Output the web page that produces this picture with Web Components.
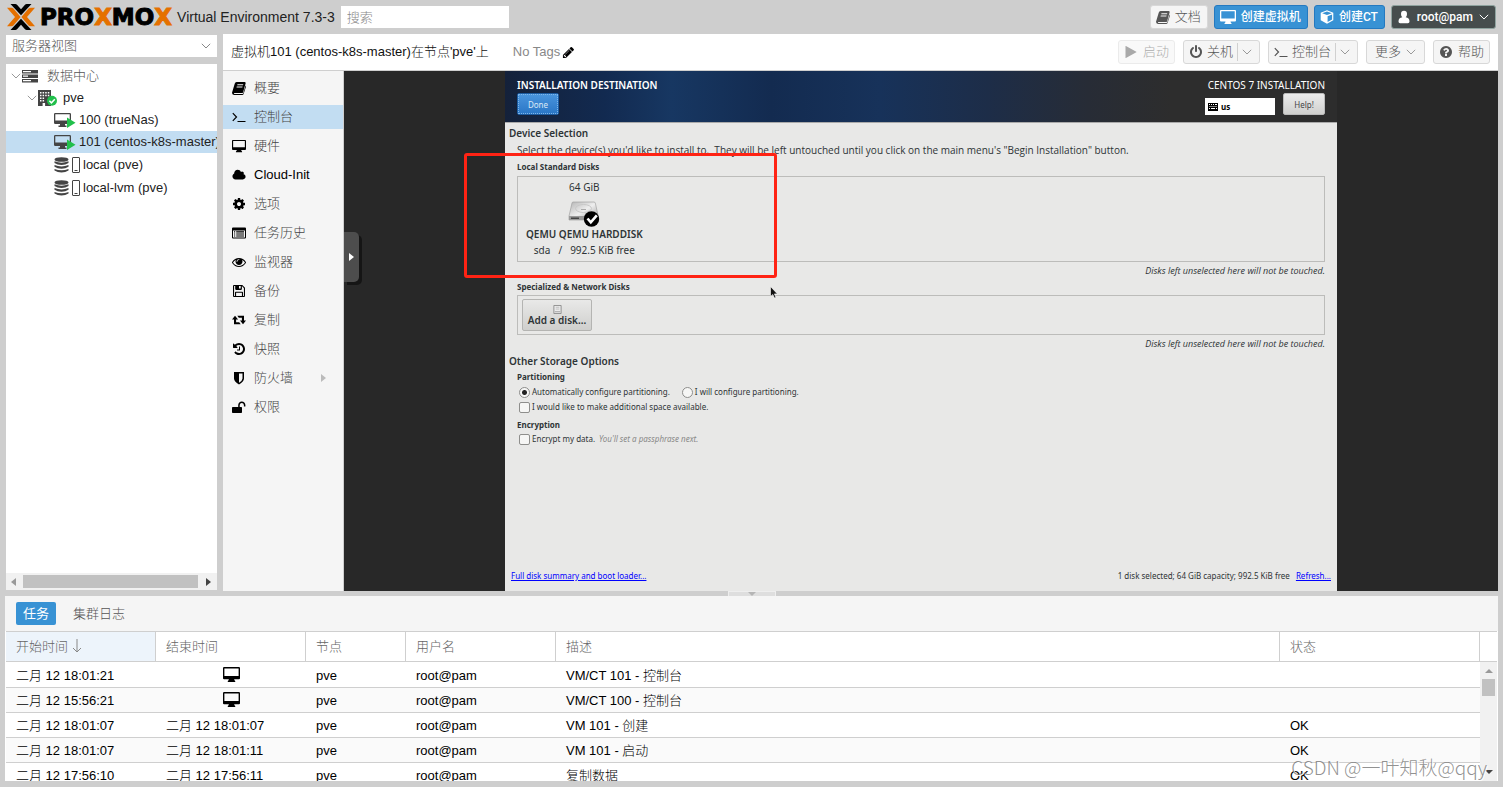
<!DOCTYPE html>
<html lang="zh-CN">
<head>
<meta charset="utf-8">
<title>pve - Proxmox Virtual Environment</title>
<style>
  html, body { margin: 0; height: 100%; }
  body {
    background: #cecece;
    color: #000;
    font: 300 13px/18px "Liberation Sans", "Noto Sans CJK SC", sans-serif;
    overflow: hidden;
  }
</style>
</head>
<body>
<pve-app></pve-app>

<script>
const ICONS = {
  cog: ['0 0 1792 1792', '<path d="M1152 896q0-106-75-181t-181-75-181 75-75 181 75 181 181 75 181-75 75-181zm512-109v222q0 12-8 23t-20 13l-185 28q-19 54-39 91 35 50 107 138 10 12 10 25t-9 23q-27 37-99 108t-94 71q-12 0-26-9l-138-108q-44 23-91 38-16 136-29 186-7 28-36 28h-222q-14 0-24.5-8.5t-11.5-21.5l-28-184q-49-16-90-37l-141 107q-10 9-25 9-14 0-25-11-126-114-165-168-7-10-7-23 0-12 8-23 15-21 51-66.5t54-70.5q-27-50-41-99l-183-27q-13-2-21-12.5t-8-23.5v-222q0-12 8-23t19-13l186-28q14-46 39-92-40-57-107-138-10-12-10-24 0-10 9-23 26-36 98.5-107.5t94.5-71.5q13 0 26 10l138 107q44-23 91-38 16-136 29-186 7-28 36-28h222q14 0 24.5 8.5t11.5 21.5l28 184q49 16 90 37l142-107q9-9 24-9 13 0 25 10 129 119 165 170 7 8 7 22 0 12-8 23-15 21-51 66.5t-54 70.5q26 50 41 98l183 28q13 2 21 12.5t8 23.5z"/>'],
  play: ['0 0 1792 1792', '<path d="M1576 927l-1328 738q-23 13-39.5 3t-16.5-36v-1472q0-26 16.5-36t39.5 3l1328 738q23 13 23 31t-23 31z"/>'],
  cloud: ['0 0 2048 1792', '<path d="M1984 1152q0 159-112.5 271.5t-271.5 112.5h-1088q-185 0-316.5-131.5t-131.5-316.5q0-132 71-241.5t187-163.5q-2-28-2-43 0-212 150-362t362-150q158 0 286.5 88t187.5 230q70-62 166-62 106 0 181 75t75 181q0 75-41 138 129 30 213 134.5t84 239.5z"/>'],
  power: ['0 0 1792 1792', '<path d="M1664 896q0 156-61 298t-164 245-245 164-298 61-298-61-245-164-164-245-61-298q0-182 80.5-343t226.5-270q43-32 95.5-25t83.5 50q32 42 24.5 94.5t-49.5 84.5q-98 74-151.5 181t-53.5 228q0 104 40.5 198.5t109.5 163.5 163.5 109.5 198.5 40.5 198.5-40.5 163.5-109.5 109.5-163.5 40.5-198.5q0-121-53.5-228t-151.5-181q-42-32-49.5-84.5t24.5-94.5q31-43 84-50t95 25q146 109 226.5 270t80.5 343zm-640-768v640q0 52-38 90t-90 38-90-38-38-90v-640q0-52 38-90t90-38 90 38 38 90z"/>'],
  history: ['0 0 1792 1792', '<path d="M1664 896q0 156-61 298t-164 245-245 164-298 61q-172 0-327-72.5t-264-204.5q-7-10-6.5-22.5t8.5-20.5l137-138q10-9 25-9 16 2 23 12 73 95 179 147t225 52q104 0 198.5-40.5t163.5-109.5 109.5-163.5 40.5-198.5-40.5-198.5-109.5-163.5-163.5-109.5-198.5-40.5q-98 0-188 35.5t-160 101.5l137 138q31 30 14 69-17 40-59 40h-448q-26 0-45-19t-19-45v-448q0-42 40-59 39-17 69 14l130 129q107-101 244.5-156.5t284.5-55.5q156 0 298 61t245 164 164 245 61 298zm-640-288v448q0 14-9 23t-23 9h-320q-14 0-23-9t-9-23v-64q0-14 9-23t23-9h224v-352q0-14 9-23t23-9h64q14 0 23 9t9 23z"/>'],
  help: ['0 0 1792 1792', '<path d="M1024 1376v-192q0-14-9-23t-23-9h-192q-14 0-23 9t-9 23v192q0 14 9 23t23 9h192q14 0 23-9t9-23zm256-672q0-88-55.5-163t-138.5-116-170-41q-243 0-371 213-15 24 8 42l132 100q7 6 19 6 16 0 25-12 53-68 86-92 34-24 86-24 48 0 85.5 26t37.5 59q0 38-20 61t-68 45q-63 28-115.5 86.5t-52.5 125.5v36q0 14 9 23t23 9h192q14 0 23-9t9-23q0-19 21.5-49.5t54.5-49.5q32-18 49-28.5t46-35 44.5-48 28-60.5 12.5-81zm384 192q0 209-103 385.5t-279.5 279.5-385.5 103-385.5-103-279.5-279.5-103-385.5 103-385.5 279.5-279.5 385.5-103 385.5 103 279.5 279.5 103 385.5z"/>'],
  pencil: ['0 0 1792 1792', '<path d="M491 1536l91-91-235-235-91 91v107h128v128h107zm523-928q0-22-22-22-10 0-17 7l-542 542q-7 7-7 17 0 22 22 22 10 0 17-7l542-542q7-7 7-17zm-54-192l416 416-832 832h-416v-416zm683 96q0 53-37 90l-166 166-416-416 166-165q36-38 90-38 53 0 91 38l235 234q37 39 37 91z"/>'],
  eye: ['0 0 1792 1792', '<path d="M1664 960q-152-236-381-353 61 104 61 225 0 185-131.5 316.5t-316.5 131.5-316.5-131.5-131.5-316.5q0-121 61-225-229 117-381 353 133 205 333.5 326.5t434.5 121.5 434.5-121.5 333.5-326.5zm-720-384q0-20-14-34t-34-14q-125 0-214.5 89.5t-89.5 214.5q0 20 14 34t34 14 34-14 14-34q0-86 61-147t147-61q20 0 34-14t14-34zm848 384q0 34-20 69-140 230-376.5 368.5t-499.5 138.5-499.5-139-376.5-368q-20-35-20-69t20-69q140-229 376.5-368t499.5-139 499.5 139 376.5 368q20 35 20 69z"/>'],
  desktop: ['0 0 16 14', '<path fill-rule="evenodd" d="M1 0h14q1 0 1 1v9.500q0 1-1 1h-4.500q0 1 1 1.700v.800h-7v-.800q1-.700 1-1.700h-4.500q-1 0-1-1v-9.500q0-1 1-1zm.300 1.300v7.200h13.400v-7.200z"/>'],
  book: ['0 0 14 14', '<path fill-rule="evenodd" d="M4.600 1h8q1.300.2 1 1.600l-2.500 8.600q-.3.900-1.300.9h-7.600q-.6.500.3.8h7.900q.7 0 .9-.7l2.300-7.600q.6.300.3 1.400l-2.300 7q-.4 1-1.400 1h-8.200q-2-.3-2-2.200l2.700-9q.4-1.600 1.900-1.800zm.9 2.300-.3 1h5.800l.3-1zm-.7 2.300-.3 1h5.800l.3-1z"/>'],
  terminal: ['0 0 14 14', '<path d="M.8 3.200 4.500 7 .8 10.800" fill="none" stroke="currentColor" stroke-width="1.200"/><path d="M5.500 11h8v1h-8z"/>'],
  list: ['0 0 14 14', '<path fill-rule="evenodd" d="M1 1.500h12q1 0 1 1v9q0 1-1 1H1q-1 0-1-1v-9q0-1 1-1zm0 3v7h12v-7zm1 .8h1.200v1.100H2zm2.200 0h7.800v1.100H4.200zM2 7.400h1.200v1.100H2zm2.200 0h7.800v1.100H4.200zM2 9.500h1.200v1.100H2zm2.200 0h7.800v1.100H4.200z"/>'],
  floppy: ['0 0 14 14', '<path fill-rule="evenodd" d="M2 1h8.300l2.700 2.700V12q0 1-1 1H2q-1 0-1-1V2q0-1 1-1zm.1 1.100v9.800H3V8.500q0-.8.800-.8h6.400q.8 0 .8.800v3.400h.9V4.200L9.900 2.100v3q0 .8-.8.8H4q-.8 0-.8-.8v-3zm4.900 0v2.500h1.700V2.100zM4.100 8.800v3.100h5.800V8.800z"/>'],
  retweet: ['0 0 14 14', '<path d="M3 2.700 0 6.500h2V11.300h6.700L7.200 9.300H4.100V6.500h2zM5.300 2.700h6.700v4.800h2l-3 3.800-3-3.800h1.900V4.700H6.800z"/>'],
  shield: ['0 0 14 14', '<path fill-rule="evenodd" d="M2 1h10v6.500q0 3-5 6-5-3-5-6zm5 1.500v9.200q3.500-2.200 3.500-4.200v-5z"/>'],
  unlock: ['0 0 14 14', '<path d="M9.800 1.500q3.200 0 3.600 3.500v1.600h-1.500V5q-.3-2-2.100-2t-2.100 2v2h1.500q.8 0 .8.800v4.400q0 .8-.8.800H.8q-.8 0-.8-.8V7.800q0-.8.800-.8h5.400V5q.4-3.500 3.600-3.500z"/>'],
  user: ['0 0 14 14', '<path d="M7 .800q3 0 3 3.200 0 2.200-1.300 3.200 3.800.3 3.800 4.300 0 1.700-1.600 1.700H3.100q-1.600 0-1.600-1.700 0-4 3.800-4.300Q4 6.200 4 4q0-3.200 3-3.200z"/>'],
  cube: ['0 0 14 14', '<path fill-rule="evenodd" d="M7 .3l6.300 2.400v7.600L7 13.700.7 10.300V2.700zm0 1.200L2.200 3.300 7 5.100l4.800-1.800zM7.600 6.300v5.700l4.500-2.400V4.600z"/>'],
  chevron: ['0 0 10 10', '<path d="M.8 2.800 5 7l4.200-4.200" fill="none" stroke="currentColor"/>'],
  right: ['0 0 6 8', '<path d="M0 0v8l5-4z"/>'],
  left: ['0 0 6 8', '<path d="M5 0v8l-5-4z"/>'],
  up: ['0 0 8 4', '<path d="M0 4h8L4 0z"/>'],
  down: ['0 0 8 4', '<path d="M0 0h8L4 4z"/>'],
  sort: ['0 0 10 14', '<path d="M5 0v13M1 9l4 4 4-4" fill="none" stroke="currentColor"/>'],
  server: ['0 0 16 14', '<path fill-rule="evenodd" d="M0 1h16v3.400H0zm1 1.100v1.200h8V2.100zM0 5.500h16v3.400H0zm1 1.100v1.200h5V6.600zM0 10h16v3.400H0zm1 1.100v1.200h8v-1.200z"/>'],
  node: ['0 0 19 16', '<path fill-rule="evenodd" d="M0 0h13v16H0zm2 2v1.500h1.500V2zm2.600 0v1.500h1.500V2zm2.600 0v1.500h1.500V2zm2.600 0v1.500h1.500V2zM2 4.700v1.500h1.500V4.700zm2.600 0v1.500h1.500V4.700zm2.600 0v1.500h1.500V4.700zm2.600 0v1.500h1.500V4.700zM2 7.400v1.500h1.500V7.400zm2.600 0v1.500h1.500V7.400zM2 10.100v1.500h1.500v-1.500zm2.600 0v1.500h1.500v-1.500zM4.600 13v3h2.500v-3z"/><circle cx="14" cy="10.800" r="5" fill="#21bf4b"/><path d="m11.400 10.800 2 2 3.400-3.600" fill="none" stroke="#fff" stroke-width="1.500"/>'],
  vm: ['0 0 22 16', '<path fill-rule="evenodd" d="M1.200 1h14.600q1.200 0 1.200 1.200v8.600q0 1.200-1.200 1.200h-4.800v1.600h1.500V15H4.500v-1.400H6V12H1.200Q0 12 0 10.800V2.200Q0 1 1.200 1zm.1 1.200v6.300h14.400V2.200z"/><path d="M13 5.500v10.500l8.500-5.200z" fill="#21bf4b"/>'],
  storage: ['0 0 26 16', '<ellipse cx="7.500" cy="2.500" rx="7" ry="2.300"/><path d="M.5 4.300q7 2.800 14 0v1.700q-3 1.900-7 1.900T.5 6zm0 3.800q7 2.800 14 0v1.700q-3 1.900-7 1.900T.5 9.800zm0 3.800q7 2.800 14 0v1.700q-3 1.900-7 1.900t-7-1.900z"/><rect x="18.500" y=".5" width="7" height="15" rx=".5" fill="#fff" stroke="currentColor"/><path d="M20.500 13h3v1h-3z"/>'],
  keyboard: ['0 0 10 8', '<path fill-rule="evenodd" d="M0 0h10v8H0zm1 1v1h1V1zm2 0v1h1V1zm2 0v1h1V1zm2 0v1h2V1zM1.500 3v1h1V3zm2 0v1h1V3zm2 0v1h1V3zm2 0v1h1V3zM1 5v1h1V5zm2 0v1h4V5zm5 0v1h1V5z"/>'],
  disk: ['0 0 32 28', '<defs><linearGradient id="g" x1="0" y1="0" x2="1" y2="1"><stop offset="0" stop-color="#b4b4b4"/><stop offset=".5" stop-color="#eee"/><stop offset="1" stop-color="#999"/></linearGradient></defs><path d="M5 1h21q1 0 1.300 1L30 14v5H1v-4L4 2q.3-1 1-1z" fill="url(#g)" stroke="#999" stroke-width=".6"/><path d="M1 15h29v4H1z" fill="#9a9a9a"/><path d="M3 16.500h8v1.500H3z" fill="#444"/><ellipse cx="15.500" cy="7.500" rx="8" ry="4" fill="none" stroke="#c8c8c8"/><path d="M13 8.500h5" stroke="#aaa"/><circle cx="23.500" cy="18" r="7.700" fill="#000"/><path d="m19.500 17.500 3.300 3.800 6-7" fill="none" stroke="#fff" stroke-width="2.600"/>'],
  smalldisk: ['0 0 10 10', '<path d="M1 .5h8v9H1z" fill="#ececec" stroke="#888"/><path d="M3 2.500h4M3 4.500h4" stroke="#bbb"/><path d="M2 7.500h6" stroke="#999"/>'],
  pointer: ['0 0 8 13', '<path d="M.5.500v10l2.300-2 1.700 3.600 1.500-.7-1.600-3.500h3z" fill="#111" stroke="#fff" stroke-width=".6"/>'],
  logo: ['0 0 28 26', '<path d="M3.500 0h4.800q1 0 1.700.8l4 4.400 4-4.400q.7-.8 1.700-.8h4.800L14 11.300zM3.500 26h4.800q1 0 1.700-.8l4-4.400 4 4.400q.7.800 1.700.8h4.800L14 14.700z" fill="#000"/><path d="M0 3.800h4.500q1.100 0 1.900.8L13.600 13l-7.200 8.400q-.8.800-1.900.8H0L8 13zM28 3.800h-4.500q-1.100 0-1.900.8L14.400 13l7.200 8.400q.8.800 1.900.8H28L20 13z" fill="#e57000"/>']
};

function define(name, css, html) {
  const tpl = document.createElement('template');
  tpl.innerHTML = '<style>*{box-sizing:border-box}' + css + '</style>' + html;
  customElements.define(name, class extends HTMLElement {
    constructor() {
      super();
      this.attachShadow({ mode: 'open' }).append(tpl.content.cloneNode(true));
    }
  });
}

customElements.define('pve-icon', class extends HTMLElement {
  connectedCallback() {
    if (this.shadowRoot) return;
    const [box, body] = ICONS[this.getAttribute('name')];
    this.attachShadow({ mode: 'open' }).innerHTML =
      '<style>:host{display:inline-block;flex:none;width:14px;height:14px}svg{display:block;width:100%;height:100%}</style>' +
      '<svg viewBox="' + box + '" fill="currentColor" aria-hidden="true">' + body + '</svg>';
  }
});

/* Toolbar button: variants doc, primary, dark; flags split, menu, disabled */
customElements.define('pve-button', class extends HTMLElement {
  connectedCallback() {
    if (this.shadowRoot) return;
    const icon = this.getAttribute('icon');
    const arrow = this.hasAttribute('split') || this.hasAttribute('menu');
    this.attachShadow({ mode: 'open' }).innerHTML = `
      <style>
        :host { display: block; }
        button {
          box-sizing: border-box; display: flex; align-items: center; gap: 5px; height: 24px;
          padding: 0 5px; border: 1px solid #d8d8d8; border-radius: 3px; background: #f5f5f5;
          color: #555; font: inherit; white-space: nowrap;
        }
        button:disabled { opacity: .5; }
        :host([variant=primary]) button { background: #3892d4; border-color: #2479c0; color: #fff; font: 500 12px/18px Roboto, "Noto Sans CJK SC", sans-serif; padding: 0 6px 0 5px; }
        :host([variant=dark]) button { background: #464d4d; border-color: #8fa39f; color: #fff; font: 500 12px/18px Roboto, sans-serif; gap: 6px; padding: 0 6px 0 5px; }
        :host([variant=doc]) button { padding: 0 6px 0 5px; }
        :host([menu]:not([icon])) button { padding: 0 8px; }
        .arrow { display: flex; align-items: center; color: #999; }
        :host([variant=dark]) .arrow { color: #fff; }
        :host([split]) button { padding-right: 0; gap: 4px; }
        :host([split]) .arrow { height: 18px; padding: 0 7px 0 4px; border-left: 1px solid #d0d0d0; }
        .arrow pve-icon { width: 10px; height: 10px; }
        .wide { width: 16px; }
      </style>
      <button ${this.hasAttribute('disabled') ? 'disabled' : ''}>
        ${icon ? `<pve-icon class="${icon === 'desktop' ? 'wide' : ''}" name="${icon}"></pve-icon>` : ''}
        <span><slot></slot></span>
        ${arrow ? '<span class="arrow"><pve-icon name="chevron"></pve-icon></span>' : ''}
      </button>`;
  }
});

define('pve-header', `
  :host { display: flex; align-items: center; height: 34px; padding: 0 7px; }
  .logo { width: 28px; height: 26px; margin-right: 5px; }
  .brand { font: 700 23px/26px "DejaVu Sans", sans-serif; -webkit-text-stroke: 1px currentColor; }
  .brand b { color: #e57000; }
  .version { font-size: 14px; margin: 0 6px 0 5px; white-space: nowrap; color: #222; }
  input { width: 168px; height: 22px; padding: 0 6px; border: 0; background: #fff; font: inherit; }
  input::placeholder { color: #888; }
  .actions { display: flex; gap: 6px; margin-left: auto; }
`, `
  <pve-icon class="logo" name="logo"></pve-icon>
  <span class="brand">PRO<b>X</b>MO<b>X</b></span>
  <span class="version">Virtual Environment 7.3-3</span>
  <input type="text" placeholder="搜索" aria-label="搜索">
  <div class="actions">
    <pve-button variant="doc" icon="book">文档</pve-button>
    <pve-button variant="primary" icon="desktop">创建虚拟机</pve-button>
    <pve-button variant="primary" icon="cube">创建CT</pve-button>
    <pve-button variant="dark" icon="user" menu>root@pam</pve-button>
  </div>
`);

define('pve-tree', `
  :host { display: flex; flex-direction: column; gap: 7px; min-height: 0; }
  .view { position: relative; }
  select { appearance: none; display: block; width: 100%; height: 22px; padding: 0 6px; border: 0; border-radius: 0; background: #fff; color: #555; font: inherit; }
  .view pve-icon { position: absolute; right: 6px; top: 6px; width: 10px; height: 10px; color: #888; pointer-events: none; }
  .panel { flex: 1; display: flex; flex-direction: column; min-height: 0; background: #fff; }
  ul { flex: 1; margin: 0; padding: 1px 0 0; list-style: none; overflow: hidden; }
  li { display: flex; align-items: center; height: 22px; white-space: nowrap; color: #222; }
  li > pve-icon { color: #444; }
  .exp { width: 10px; height: 10px; color: #999; }
  .l0 { padding-left: 5px; } .l0 span { margin-left: 9px; color: #555; }
  .l1 { padding-left: 21px; } .l1 span { margin-left: 6px; }
  .l2 { padding-left: 48px; } .l2 span { margin-left: 3px; }
  .l3 { height: 23px; padding-left: 48px; } .l3 span { margin-left: 3px; }
  .on { background: #c2ddf2; }
  .server { width: 16px; height: 14px; margin-left: 1px; }
  .node { width: 19px; height: 16px; margin-left: 1px; }
  .vm { width: 22px; height: 16px; }
  .st { width: 26px; height: 16px; }
  .bar { display: flex; align-items: center; justify-content: space-between; height: 17px; padding: 0 5px; background: #f1f1f1; color: #999; }
  .bar pve-icon { width: 6px; height: 8px; }
  .bar pve-icon:last-child { color: #444; }
  .thumb { flex: 1; height: 13px; margin: 0 8px 0 6px; background: #c1c1c1; }
`, `
  <div class="view">
    <select aria-label="视图"><option>服务器视图</option></select>
    <pve-icon name="chevron"></pve-icon>
  </div>
  <div class="panel">
    <ul>
      <li class="l0"><pve-icon class="exp" name="chevron"></pve-icon><pve-icon class="server" name="server"></pve-icon><span>数据中心</span></li>
      <li class="l1"><pve-icon class="exp" name="chevron"></pve-icon><pve-icon class="node" name="node"></pve-icon><span>pve</span></li>
      <li class="l2"><pve-icon class="vm" name="vm"></pve-icon><span>100 (trueNas)</span></li>
      <li class="l2 on"><pve-icon class="vm" name="vm"></pve-icon><span>101 (centos-k8s-master)</span></li>
      <li class="l3"><pve-icon class="st" name="storage"></pve-icon><span>local (pve)</span></li>
      <li class="l3"><pve-icon class="st" name="storage"></pve-icon><span>local-lvm (pve)</span></li>
    </ul>
    <div class="bar"><pve-icon name="left"></pve-icon><span class="thumb"></span><pve-icon name="right"></pve-icon></div>
  </div>
`);

define('pve-vm-bar', `
  :host { display: flex; align-items: center; height: 37px; padding: 0 8px; background: #fff; border-bottom: 1px solid #cfcfcf; white-space: nowrap; }
  h1 { margin: 0 24px 0 0; font: inherit; color: #111; }
  .tags { color: #888; margin-right: 2px; }
  .edit { width: 13px; height: 13px; color: #000; }
  .actions { display: flex; gap: 8px; margin-left: auto; }
`, `
  <h1>虚拟机101 (centos-k8s-master)在节点'pve'上</h1>
  <span class="tags">No Tags</span><pve-icon class="edit" name="pencil"></pve-icon>
  <div class="actions">
    <pve-button icon="play" disabled>启动</pve-button>
    <pve-button icon="power" split>关机</pve-button>
    <pve-button icon="terminal" split>控制台</pve-button>
    <pve-button menu>更多</pve-button>
    <pve-button icon="help">帮助</pve-button>
  </div>
`);

define('pve-menu-item', `
  :host { display: block; }
  a { display: flex; align-items: center; gap: 8px; height: 24px; padding: 0 16px 0 9px; color: #444; text-decoration: none; }
  :host([active]) a { background: #c2ddf2; }
  ::slotted(pve-icon) { color: #000; }
  .more { display: none; margin-left: auto; width: 6px; height: 8px; color: #bbb; }
  :host([more]) .more { display: block; }
`, `<a href="#"><slot name="icon"></slot><slot></slot><pve-icon class="more" name="right"></pve-icon></a>`);

define('pve-side-menu', `
  :host { display: block; background: #f5f5f5; border-right: 1px solid #cfcfcf; }
  nav { display: flex; flex-direction: column; gap: 5px; padding-top: 5px; }
  .latin { color: #000; }
`, `
  <nav>
    <pve-menu-item><pve-icon slot="icon" name="book"></pve-icon>概要</pve-menu-item>
    <pve-menu-item active><pve-icon slot="icon" name="terminal"></pve-icon>控制台</pve-menu-item>
    <pve-menu-item><pve-icon slot="icon" name="desktop"></pve-icon>硬件</pve-menu-item>
    <pve-menu-item><pve-icon slot="icon" name="cloud"></pve-icon><span class="latin">Cloud-Init</span></pve-menu-item>
    <pve-menu-item><pve-icon slot="icon" name="cog"></pve-icon>选项</pve-menu-item>
    <pve-menu-item><pve-icon slot="icon" name="list"></pve-icon>任务历史</pve-menu-item>
    <pve-menu-item><pve-icon slot="icon" name="eye"></pve-icon>监视器</pve-menu-item>
    <pve-menu-item><pve-icon slot="icon" name="floppy"></pve-icon>备份</pve-menu-item>
    <pve-menu-item><pve-icon slot="icon" name="retweet"></pve-icon>复制</pve-menu-item>
    <pve-menu-item><pve-icon slot="icon" name="history"></pve-icon>快照</pve-menu-item>
    <pve-menu-item more><pve-icon slot="icon" name="shield"></pve-icon>防火墙</pve-menu-item>
    <pve-menu-item><pve-icon slot="icon" name="unlock"></pve-icon>权限</pve-menu-item>
  </nav>
`);

define('installer-screen', `
  :host { position: relative; display: flex; flex-direction: column; height: 100%; aspect-ratio: 8 / 5; background: #e8e8e7; color: #2e3436; font: 400 8px/14px "Noto Sans", sans-serif; white-space: nowrap; }
  header { display: flex; justify-content: space-between; height: 52px; padding: 7px 12px 0; border-bottom: 1px solid #aaa; color: #fff; background: linear-gradient(90deg, #14213a 0, #122a50 12%, #173762 20%, #132b50 32%, #17325a 45%, #1d2d48 58%, #272c36 70%, #2d2d2d 80%); font-size: 10px; line-height: 15px; }
  h1 { margin: 0; font-size: 10px; font-weight: 600; line-height: 15px; }
  button { font: inherit; border-radius: 2px; padding: 0; }
  .done { display: block; width: 42px; height: 22px; border: 1px solid #1c5a9e; background: linear-gradient(#4a95dd, #2a76c6); color: #dce9f6; font-size: 8px; outline: 1px dotted #7fb6ea; outline-offset: -2px; }
  .right { display: grid; grid-template-columns: 70px 42px; column-gap: 8px; align-items: start; align-content: start; justify-content: end; }
  .right span { grid-column: 1 / 3; text-align: right; }
  .kbd { display: flex; align-items: center; gap: 3px; height: 17px; margin-top: 5px; padding: 0 3px; border: 0; border-radius: 0; background: #fff; color: #000; font-size: 8px; font-weight: 700; }
  .kbd pve-icon { width: 10px; height: 8px; }
  .help { height: 22px; border: 1px solid #bbb; background: linear-gradient(#ececec, #d0d0ce); color: #444; font-size: 8px; }
  main { display: flex; flex-direction: column; flex: 1; padding: 2px 12px 8px; }
  h2 { margin: 0 0 0 -8px; font-size: 10px; font-weight: 600; line-height: 16px; }
  h3 { margin: 0; font-size: 8px; font-weight: 700; line-height: 14px; }
  p { margin: 0; font-family: "Open Sans", sans-serif; font-size: 10px; line-height: 18px; }
  .title { line-height: 16px; }
  .box { display: flex; border: 1px solid #bcbcba; }
  .local { height: 86px; padding: 2px 8px; margin-top: 1px; }
  .net { height: 40px; padding: 3px 4px; }
  .disk { display: flex; flex-direction: column; align-items: center; font-size: 10px; line-height: 16px; }
  .disk pve-icon { width: 32px; height: 28px; margin: 6px 0 -2px; }
  .disk strong { font-weight: 600; line-height: 15px; }
  .disk div { display: flex; gap: 8px; }
  .note { font-family: "Open Sans", sans-serif; font-size: 9px; font-style: italic; text-align: right; line-height: 16px; margin-top: 1px; }
  .add { display: flex; flex-direction: column; align-items: center; justify-content: center; width: 70px; height: 32px; border: 1px solid #b4b4b2; background: linear-gradient(#e9e9e8, #cfcfcd); color: #2e3436; font-size: 10px; font-weight: 600; line-height: 12px; }
  .add pve-icon { width: 9px; height: 9px; }
  .group { display: flex; flex-direction: column; gap: 1px; margin-top: 1px; }
  .options { margin-top: 1px; }
  .row { display: flex; gap: 12px; padding-left: 2px; }
  label { display: flex; align-items: center; gap: 2px; }
  input { appearance: none; width: 11px; height: 11px; margin: 0; border: 1px solid #8e8e8c; border-radius: 2px; background: #f6f6f5; }
  input[type=radio] { border-radius: 50%; }
  input[type=radio]:checked { background: radial-gradient(circle, #222 0 2px, #f6f6f5 3px); }
  label i { margin-left: 2px; color: #888; }
  .enc { gap: 0; margin-top: 4px; }
  footer { display: flex; justify-content: space-between; margin: auto -6px 0; }
  a { color: #00f; }
  footer a:last-child { margin-left: 4px; }
  .mark { position: absolute; left: -41px; top: 82px; width: 313px; height: 125px; border: 3px solid #ff2314; border-radius: 3px; }
  .pointer { position: absolute; left: 265px; top: 215px; width: 8px; height: 13px; }
`, `
  <header>
    <div><h1>INSTALLATION DESTINATION</h1><button class="done">Done</button></div>
    <div class="right"><span>CENTOS 7 INSTALLATION</span><button class="kbd"><pve-icon name="keyboard"></pve-icon>us</button><button class="help">Help!</button></div>
  </header>
  <main>
    <h2>Device Selection</h2>
    <p>Select the device(s) you'd like to install to.&nbsp; They will be left untouched until you click on the main menu's "Begin Installation" button.</p>
    <h3 class="title">Local Standard Disks</h3>
    <div class="box local">
      <div class="disk"><span>64 GiB</span><pve-icon name="disk"></pve-icon><strong>QEMU QEMU HARDDISK</strong><div><span>sda</span><span>/</span><span>992.5 KiB free</span></div></div>
    </div>
    <div class="note">Disks left unselected here will not be touched.</div>
    <h3 class="title">Specialized &amp; Network Disks</h3>
    <div class="box net"><button class="add"><pve-icon name="smalldisk"></pve-icon>Add a disk...</button></div>
    <div class="note">Disks left unselected here will not be touched.</div>
    <h2 class="options">Other Storage Options</h2>
    <div class="group">
      <h3>Partitioning</h3>
      <div class="row">
        <label><input type="radio" name="part" checked>Automatically configure partitioning.</label>
        <label><input type="radio" name="part">I will configure partitioning.</label>
      </div>
      <div class="row"><label><input type="checkbox">I would like to make additional space available.</label></div>
    </div>
    <div class="group enc">
      <h3>Encryption</h3>
      <div class="row"><label><input type="checkbox">Encrypt my data. <i>You'll set a passphrase next.</i></label></div>
    </div>
    <footer><a href="#">Full disk summary and boot loader...</a><span>1 disk selected; 64 GiB capacity; 992.5 KiB free <a href="#">Refresh...</a></span></footer>
  </main>
  <div class="mark"></div>
  <pve-icon class="pointer" name="pointer"></pve-icon>
`);

define('pve-console', `
  :host { position: relative; display: flex; justify-content: center; min-width: 0; min-height: 0; background: #282828; overflow: hidden; }
  .handle { position: absolute; left: 0; top: 161px; display: flex; align-items: center; justify-content: center; width: 15px; height: 50px; padding: 0; border: 0; border-radius: 0 5px 5px 0; background: #4d4d4d; box-shadow: 3px 3px 0 #151515; color: #fff; }
  .handle pve-icon { width: 6px; height: 8px; }
`, `
  <installer-screen></installer-screen>
  <button class="handle" aria-label="控制栏"><pve-icon name="right"></pve-icon></button>
`);

define('pve-log', `
  :host { position: relative; display: flex; flex-direction: column; margin: 0 5px 6px; background: #fff; overflow: hidden; }
  .tabs { display: flex; align-items: center; gap: 6px; flex: none; height: 35px; padding: 0 11px; background: #f5f5f5; }
  .tabs button { height: 23px; padding: 0 7px; border: 0; border-radius: 2px; background: none; color: #555; font: inherit; }
  .tabs .on { background: #3892d4; color: #fff; font-weight: 400; }
  .tabs button + button { padding: 0 11px; }
  .grid { position: relative; flex: 1; min-height: 0; margin: 0 1px; overflow: hidden; border-top: 1px solid #cfcfcf; }
  table { width: 100%; table-layout: fixed; border-collapse: separate; border-spacing: 0; }
  th { height: 30px; padding: 0 10px; border-right: 1px solid #cfcfcf; border-bottom: 1px solid #cfcfcf; color: #666; font-weight: 300; text-align: left; }
  th:last-child, td:last-child { padding: 0; border-right: 0; }
  .sorted { background: #edf4fb; }
  .sorted pve-icon { width: 10px; height: 14px; margin-left: 4px; vertical-align: -2px; color: #888; }
  td { height: 25px; padding: 0 10px; border-top: 1px solid #cfcfcf; line-height: 22px; white-space: nowrap; vertical-align: bottom; }
  tr:first-child td { border-top-color: transparent; }
  tbody tr:nth-child(even) { background: #fafafa; }
  td pve-icon { display: block; width: 17px; height: 15px; margin: 0 auto 5px; }
  .c150 { width: 150px; } .c100 { width: 100px; } .c200 { width: 200px; } .c17 { width: 17px; }
  .bar { position: absolute; right: 0; top: 30px; bottom: 0; display: flex; flex-direction: column; align-items: center; width: 17px; padding: 7px 0; background: #f1f1f1; color: #999; }
  .bar pve-icon { width: 8px; height: 4px; }
  .thumb { width: 13px; height: 17px; margin: 6px 0 auto; background: #c1c1c1; }
  .bar pve-icon:last-child { color: #444; }
`, `
  <div class="tabs"><button class="on">任务</button><button>集群日志</button></div>
  <div class="grid">
    <table>
      <thead><tr><th class="c150 sorted">开始时间<pve-icon name="sort"></pve-icon></th><th class="c150">结束时间</th><th class="c100">节点</th><th class="c150">用户名</th><th>描述</th><th class="c200">状态</th><th class="c17"></th></tr></thead>
      <tbody>
        <tr><td>二月 12 18:01:21</td><td><pve-icon name="desktop"></pve-icon></td><td>pve</td><td>root@pam</td><td>VM/CT 101 - 控制台</td><td></td><td></td></tr>
        <tr><td>二月 12 15:56:21</td><td><pve-icon name="desktop"></pve-icon></td><td>pve</td><td>root@pam</td><td>VM/CT 100 - 控制台</td><td></td><td></td></tr>
        <tr><td>二月 12 18:01:07</td><td>二月 12 18:01:07</td><td>pve</td><td>root@pam</td><td>VM 101 - 创建</td><td>OK</td><td></td></tr>
        <tr><td>二月 12 18:01:07</td><td>二月 12 18:01:11</td><td>pve</td><td>root@pam</td><td>VM 101 - 启动</td><td>OK</td><td></td></tr>
        <tr><td>二月 12 17:56:10</td><td>二月 12 17:56:11</td><td>pve</td><td>root@pam</td><td>复制数据</td><td>OK</td><td></td></tr>
      </tbody>
    </table>
    <div class="bar"><pve-icon name="up"></pve-icon><span class="thumb"></span><pve-icon name="down"></pve-icon></div>
  </div>
`);

define('pve-splitter', `
  :host { display: flex; justify-content: center; height: 5px; }
  div { display: flex; align-items: end; justify-content: center; width: 48px; background: #dedede; border: 1px solid #eee; border-bottom: 0; color: #b5b5b5; }
  pve-icon { width: 8px; height: 4px; }
`, `<div><pve-icon name="down"></pve-icon></div>`);

define('pve-app', `
  :host { display: flex; flex-direction: column; height: 100vh; }
  .work { flex: 1; display: grid; grid-template-columns: 211px minmax(0, 1fr); gap: 6px; min-height: 0; padding: 0 5px 0 6px; }
  pve-tree { padding: 1px 0; }
  .vm { display: grid; grid-template: auto minmax(0, 1fr) / 121px minmax(0, 1fr); min-height: 0; }
  pve-vm-bar { grid-column: 1 / 3; }
  pve-log { flex: 0 0 185px; }
  .stamp { position: absolute; right: 16px; bottom: 6px; color: rgba(110, 110, 110, .75); font: 300 19px/28px "Noto Sans CJK SC", sans-serif; text-shadow: 1px 1px 0 #fff; pointer-events: none; }
`, `
  <pve-header></pve-header>
  <div class="work">
    <pve-tree></pve-tree>
    <div class="vm"><pve-vm-bar></pve-vm-bar><pve-side-menu></pve-side-menu><pve-console></pve-console></div>
  </div>
  <pve-splitter></pve-splitter>
  <pve-log></pve-log>
  <div class="stamp">CSDN @一叶知秋@qqy</div>
`);
</script>
</body>
</html>
